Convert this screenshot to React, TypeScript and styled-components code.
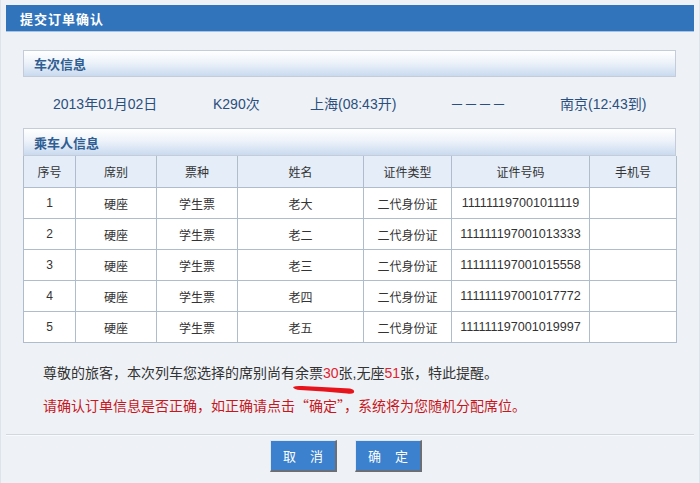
import React from "react";
import styled, { createGlobalStyle } from "styled-components";

const GlobalStyle = createGlobalStyle`
  html, body {
    margin: 0;
    padding: 0;
    background: #e9edf2;
  }
  body {
    font-family: "Liberation Sans", Arial, "Noto Sans CJK SC", sans-serif;
  }
`;

const Dialog = styled.div`
  width: 700px;
  height: 483px;
  box-sizing: border-box;
  padding: 5px 5px 0 5px;
  background: #eef2f6;
  border-left: 1px solid #dde3ea;
  border-right: 1px solid #dde3ea;
  display: flex;
  flex-direction: column;
`;

const TitleBar = styled.div`
  height: 27px;
  background: #3174bc;
  border-bottom: 1px solid #a7c3e3;
  box-sizing: border-box;
  padding-left: 14px;
  display: flex;
  align-items: center;
  color: #fff;
  font-family: "Noto Sans CJK SC", sans-serif;
  font-weight: 700;
  font-size: 13px;
  letter-spacing: 1px;
`;

const Body = styled.div`
  padding: 18px 18px 0 17px;
  display: flex;
  flex-direction: column;
`;

const SectionHeader = styled.div<{ $h: number }>`
  width: 653px;
  height: ${(p) => p.$h}px;
  box-sizing: border-box;
  border: 1px solid #c3ccd8;
  background: linear-gradient(to bottom, #ffffff 0%, #eef3fa 45%, #c9daef 100%);
  padding-left: 10px;
  display: flex;
  align-items: center;
  color: #2f5e93;
  font-family: "Noto Sans CJK SC", sans-serif;
  font-weight: 700;
  font-size: 13px;
`;

const TrainRow = styled.div`
  height: 51px;
  display: grid;
  grid-template-columns: 30px 160px 97px 140px 110px 1fr;
  align-items: center;
  color: #2b4f7e;
  font-size: 14px;
`;

const TrainCell = styled.span`
  white-space: nowrap;
`;

const Dashes = styled.span`
  font-family: "Noto Sans CJK SC", sans-serif;
  letter-spacing: 0px;
  white-space: nowrap;
`;

const Table = styled.table`
  width: 653px;
  border-collapse: collapse;
  table-layout: fixed;
  font-size: 12px;
  color: #333;
`;

const Col = styled.col<{ $w: number }>`
  width: ${(p) => p.$w}px;
`;

const Th = styled.th`
  height: 31px;
  padding: 0;
  border: 1px solid #aebccb;
  border-top: none;
  background: #e4edf8;
  font-weight: 400;
  color: #333;
  text-align: center;
  font-family: "Noto Sans CJK SC", sans-serif;
`;

const Td = styled.td<{ $wide?: boolean }>`
  height: 30px;
  padding: 0;
  border: 1px solid #aebccb;
  background: #fff;
  text-align: center;
  white-space: nowrap;
  font-size: ${(p) => (p.$wide ? "12.6px" : "12px")};
`;

const Notice = styled.div<{ $red?: boolean }>`
  padding-left: 20px;
  font-size: 14px;
  line-height: 32px;
  color: ${(p) => (p.$red ? "#c8161d" : "#333")};
  white-space: nowrap;
`;

const FirstNotice = styled(Notice)`
  margin-top: 14px;
`;

const Num = styled.span`
  color: #e2222e;
`;

const Quote = styled.span`
  font-family: "Noto Sans CJK SC", sans-serif;
`;

const Marked = styled.span`
  position: relative;
`;

const Stroke = styled.svg`
  position: absolute;
  left: -3px;
  top: 18px;
  width: 64px;
  height: 14px;
  overflow: visible;
`;

const Divider = styled.div`
  margin-top: 12px;
  height: 1px;
  background: #d1d8e0;
  border-bottom: 1px solid #f8fafc;
`;

const Buttons = styled.div`
  display: flex;
  gap: 18px;
  padding-top: 4px;
  padding-left: 264px;
`;

const Button = styled.button`
  width: 67px;
  height: 32px;
  box-sizing: border-box;
  background: #3b81cd;
  border: 1px solid;
  border-color: #dfe7f0 #6b6f75 #6b6f75 #dfe7f0;
  border-width: 1px 2px 2px 1px;
  color: #fff;
  font-family: "Noto Sans CJK SC", sans-serif;
  font-size: 13px;
  display: flex;
  align-items: center;
  justify-content: space-between;
  padding: 0 12px;
  cursor: pointer;
`;

const headers = ["序号", "席别", "票种", "姓名", "证件类型", "证件号码", "手机号"];
const widths = [52, 81, 81, 126, 88, 138, 87];
const passengers = [
  ["1", "硬座", "学生票", "老大", "二代身份证", "111111197001011119"],
  ["2", "硬座", "学生票", "老二", "二代身份证", "111111197001013333"],
  ["3", "硬座", "学生票", "老三", "二代身份证", "111111197001015558"],
  ["4", "硬座", "学生票", "老四", "二代身份证", "111111197001017772"],
  ["5", "硬座", "学生票", "老五", "二代身份证", "111111197001019997"],
];

export default function App() {
  return (
    <>
      <GlobalStyle />
      <Dialog>
        <TitleBar>提交订单确认</TitleBar>
        <Body>
          <SectionHeader $h={27}>车次信息</SectionHeader>
          <TrainRow>
            <span />
            <TrainCell>2013年01月02日</TrainCell>
            <TrainCell>K290次</TrainCell>
            <TrainCell>上海(08:43开)</TrainCell>
            <Dashes>－－－－</Dashes>
            <TrainCell>南京(12:43到)</TrainCell>
          </TrainRow>
          <SectionHeader $h={28}>乘车人信息</SectionHeader>
          <Table>
            <colgroup>
              {widths.map((w, i) => (
                <Col key={i} $w={w} />
              ))}
            </colgroup>
            <thead>
              <tr>
                {headers.map((h) => (
                  <Th key={h}>{h}</Th>
                ))}
              </tr>
            </thead>
            <tbody>
              {passengers.map((p) => (
                <tr key={p[0]}>
                  {p.map((c, i) => (
                    <Td key={i} $wide={i === 5}>
                      {c}
                    </Td>
                  ))}
                  <Td />
                </tr>
              ))}
            </tbody>
          </Table>
          <FirstNotice>
            尊敬的旅客，本次列车您选择的席别尚有
            <Marked>
              余票<Num>30</Num>张
              <Stroke viewBox="0 0 64 14">
                <path
                  d="M1 4 Q4 2.5 10 3 Q35 4 58 5.5 Q63 6.5 62 9.5 Q60 11.5 55 10.5 Q32 8 8 7 Q2 6.5 1 4 Z"
                  fill="#e8141c"
                />
              </Stroke>
            </Marked>
            ,无座<Num>51</Num>张，特此提醒。
          </FirstNotice>
          <Notice $red>
            请确认订单信息是否正确，如正确请点击<Quote>“</Quote>确定<Quote>”</Quote>，系统将为您随机分配席位。
          </Notice>
        </Body>
        <Divider />
        <Buttons>
          <Button>
            <span>取</span>
            <span>消</span>
          </Button>
          <Button>
            <span>确</span>
            <span>定</span>
          </Button>
        </Buttons>
      </Dialog>
    </>
  );
}
